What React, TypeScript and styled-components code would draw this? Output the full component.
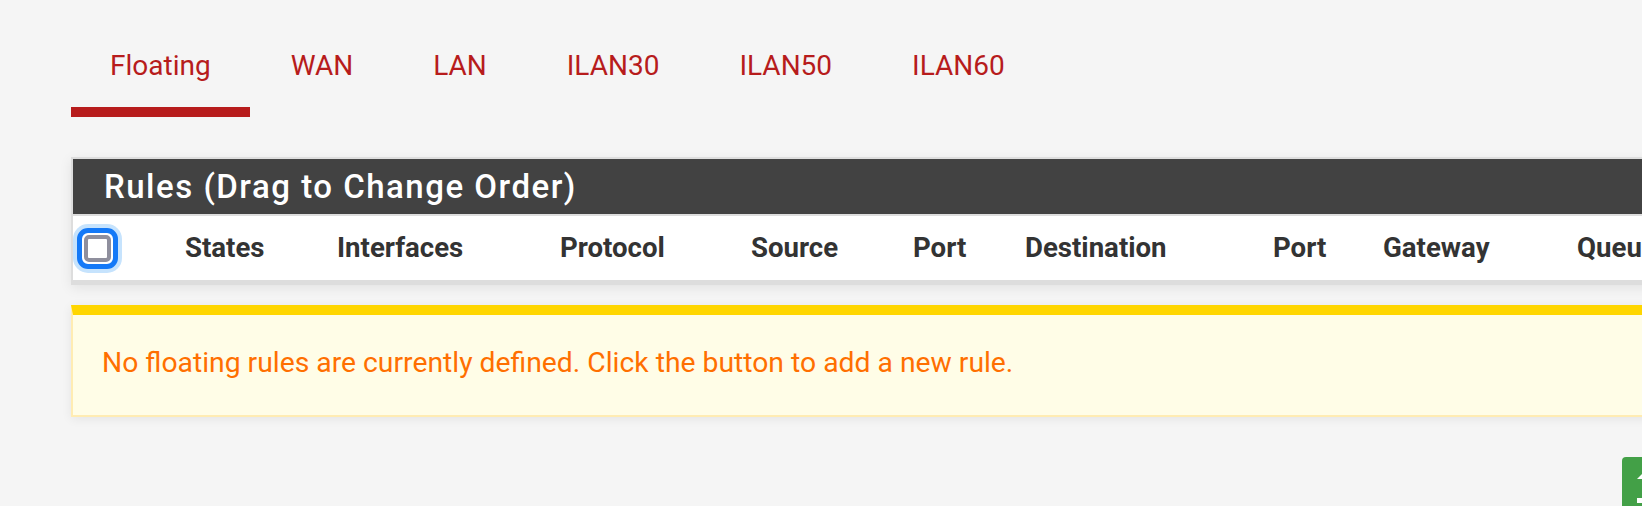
import { createGlobalStyle, styled } from "styled-components";

const GlobalStyle = createGlobalStyle`
  html, body {
    margin: 0;
    padding: 0;
    background-color: #f5f5f5;
    overflow: hidden;
  }
  body {
    font-family: Roboto, "Liberation Sans", sans-serif;
  }
`;

const tabs = ["Floating", "WAN", "LAN", "ILAN30", "ILAN50", "ILAN60"];

const columns: { label: string; w: number }[] = [
  { label: "States", w: 152 },
  { label: "Interfaces", w: 223 },
  { label: "Protocol", w: 191 },
  { label: "Source", w: 162 },
  { label: "Port", w: 112 },
  { label: "Destination", w: 248 },
  { label: "Port", w: 110 },
  { label: "Gateway", w: 194 },
  { label: "Queue", w: 160 },
  { label: "Schedule", w: 180 },
  { label: "Description", w: 220 },
  { label: "Actions", w: 160 },
];

function LevelUpIcon() {
  return (
    <svg width="24" height="36" viewBox="0 0 24 36">
      <path d="M0 11 L11 0 L22 11 Z" fill="#fff" />
      <rect x="8.5" y="10" width="5" height="22" fill="#fff" />
      <rect x="0" y="30" width="13.5" height="5" fill="#fff" />
    </svg>
  );
}

function App() {
  return (
    <StPage>
      <GlobalStyle />
      <StTabs>
        {tabs.map((t, i) => (
          <StTab key={t} $active={i === 0}>
            {t}
          </StTab>
        ))}
      </StTabs>

      <StPanel>
        <StPanelHeading>Rules (Drag to Change Order)</StPanelHeading>
        <StHeadRow>
          <StCheckCell>
            <StCheckFocus>
              <StCheckBox />
            </StCheckFocus>
          </StCheckCell>
          {columns.map((c, i) => (
            <StHeadCell key={i} $w={c.w}>
              {c.label}
            </StHeadCell>
          ))}
        </StHeadRow>
      </StPanel>

      <StAlert>
        No floating rules are currently defined. Click the button to add a new
        rule.
      </StAlert>

      <StButtonBar>
        <StButton $color="#43a047">
          <LevelUpIcon />
          Add
        </StButton>
        <StButton $color="#43a047">
          <LevelUpIcon />
          Add
        </StButton>
        <StButton $color="#c62828">Delete</StButton>
        <StButton $color="#1976d2">Save</StButton>
        <StButton $color="#43a047">Separator</StButton>
      </StButtonBar>
    </StPage>
  );
}

export default App;

const StButton = styled.button<{ $color: string }>`
  display: flex;
  align-items: flex-start;
  gap: 10px;
  height: 56px;
  width: 130px;
  padding: 11px 0 0 15px;
  border: none;
  border-radius: 4px;
  background-color: ${(p) => p.$color};
  color: white;
  font-family: Roboto, "Liberation Sans", sans-serif;
  font-size: 26px;
  line-height: 36px;
  box-sizing: border-box;
`;

const StButtonBar = styled.div`
  display: flex;
  justify-content: flex-end;
  gap: 8px;
  margin-top: 40px;
`;

const StAlert = styled.div`
  margin-top: 20px;
  box-sizing: border-box;
  height: 112px;
  padding: 28px 0 0 29px;
  border-top: 10px solid #ffd600;
  border-left: 2px solid #ffecb3;
  border-bottom: 2px solid #ffecb3;
  background-color: #fffde7;
  box-shadow: 0 2px 10px rgba(0, 0, 0, 0.07);

  color: #ff6f00;
  font-size: 28.3px;
  line-height: 40px;
`;

const StHeadCell = styled.div<{ $w: number }>`
  flex: 0 0 ${(p) => p.$w}px;
  color: #333333;
  font-size: 27.6px;
  font-weight: 700;
  white-space: nowrap;
`;

const StCheckBox = styled.span`
  display: block;
  flex: 1;
  border: 4px solid #8f8f9d;
  border-radius: 5px;
  background-color: white;
`;

const StCheckFocus = styled.span`
  display: flex;
  box-sizing: border-box;
  width: 41px;
  height: 41px;
  padding: 2px;
  border: 5px solid #1479f7;
  border-radius: 11px;
  background-color: white;
  box-shadow: 0 0 0 4px #c6e3fd;
`;

const StCheckCell = styled.div`
  display: flex;
  align-items: center;
  flex: 0 0 108px;
  padding-left: 4px;
`;

const StHeadRow = styled.div`
  display: flex;
  align-items: center;
  height: 64px;
  border-top: 2px solid #dddddd;
  background-color: white;
  line-height: 30px;
`;

const StPanelHeading = styled.h2`
  margin: 0;
  height: 55px;
  padding-left: 31px;
  background-color: #424242;
  color: white;
  font-size: 33px;
  font-weight: 500;
  letter-spacing: 1.5px;
  line-height: 55px;
  white-space: nowrap;
`;

const StPanel = styled.div`
  margin-top: 40px;
  border: 2px solid #dddddd;
  border-bottom-width: 5px;
  box-shadow: 0 3px 12px rgba(0, 0, 0, 0.08);
`;

const StTab = styled.div<{ $active: boolean }>`
  padding: 49px 39px 24px;
  border-bottom: 10px solid
    ${(p) => (p.$active ? "#b71c1c" : "transparent")};
  color: #b71c1c;
  font-size: 28px;
  line-height: 34px;
`;

const StTabs = styled.nav`
  display: flex;
  gap: 2px;
`;

const StPage = styled.div`
  width: 2304px;
  padding-left: 71px;
  box-sizing: border-box;
`;
